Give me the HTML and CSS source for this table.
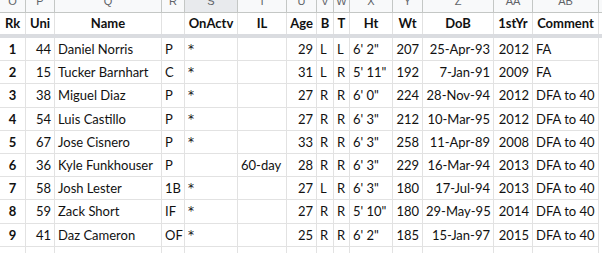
FILE: index.html
```html
<!DOCTYPE html>
<html>
<head>
<meta charset="utf-8">
<link rel="stylesheet" href="styles.css">
</head>
<body>
<div class="sheet">
  <div class="letters">
    <div class="lc">O</div><div class="lc">P</div><div class="lc">Q</div><div class="lc">R</div><div class="lc sel">S</div><div class="lc">T</div><div class="lc">U</div><div class="lc">V</div><div class="lc">W</div><div class="lc">X</div><div class="lc">Y</div><div class="lc">Z</div><div class="lc">AA</div><div class="lc">AB</div>
  </div>
  <div class="row head">
    <div class="c">Rk</div><div class="c">Uni</div><div class="c">Name</div><div class="c"></div><div class="c">OnActv</div><div class="c">IL</div><div class="c">Age</div><div class="c">B</div><div class="c">T</div><div class="c">Ht</div><div class="c">Wt</div><div class="c">DoB</div><div class="c">1stYr</div><div class="c">Comment</div>
  </div>
  <div class="band"></div>
  <div class="row">
    <div class="c rk">1</div><div class="c r">44</div><div class="c">Daniel Norris</div><div class="c">P</div><div class="c st">*</div><div class="c"></div><div class="c r">29</div><div class="c">L</div><div class="c">L</div><div class="c">6' 2"</div><div class="c r">207</div><div class="c r">25-Apr-93</div><div class="c r">2012</div><div class="c">FA</div>
  </div>
  <div class="row">
    <div class="c rk">2</div><div class="c r">15</div><div class="c">Tucker Barnhart</div><div class="c">C</div><div class="c st">*</div><div class="c"></div><div class="c r">31</div><div class="c">L</div><div class="c">R</div><div class="c">5' 11"</div><div class="c r">192</div><div class="c r">7-Jan-91</div><div class="c r">2009</div><div class="c">FA</div>
  </div>
  <div class="row">
    <div class="c rk">3</div><div class="c r">38</div><div class="c">Miguel Diaz</div><div class="c">P</div><div class="c st">*</div><div class="c"></div><div class="c r">27</div><div class="c">R</div><div class="c">R</div><div class="c">6' 0"</div><div class="c r">224</div><div class="c r">28-Nov-94</div><div class="c r">2012</div><div class="c">DFA to 40</div>
  </div>
  <div class="row">
    <div class="c rk">4</div><div class="c r">54</div><div class="c">Luis Castillo</div><div class="c">P</div><div class="c st">*</div><div class="c"></div><div class="c r">27</div><div class="c">R</div><div class="c">R</div><div class="c">6' 3"</div><div class="c r">212</div><div class="c r">10-Mar-95</div><div class="c r">2012</div><div class="c">DFA to 40</div>
  </div>
  <div class="row">
    <div class="c rk">5</div><div class="c r">67</div><div class="c">Jose Cisnero</div><div class="c">P</div><div class="c st">*</div><div class="c"></div><div class="c r">33</div><div class="c">R</div><div class="c">R</div><div class="c">6' 3"</div><div class="c r">258</div><div class="c r">11-Apr-89</div><div class="c r">2008</div><div class="c">DFA to 40</div>
  </div>
  <div class="row">
    <div class="c rk">6</div><div class="c r">36</div><div class="c">Kyle Funkhouser</div><div class="c">P</div><div class="c"></div><div class="c">60-day</div><div class="c r">28</div><div class="c">R</div><div class="c">R</div><div class="c">6' 3"</div><div class="c r">229</div><div class="c r">16-Mar-94</div><div class="c r">2013</div><div class="c">DFA to 40</div>
  </div>
  <div class="row">
    <div class="c rk">7</div><div class="c r">58</div><div class="c">Josh Lester</div><div class="c">1B</div><div class="c st">*</div><div class="c"></div><div class="c r">27</div><div class="c">L</div><div class="c">R</div><div class="c">6' 3"</div><div class="c r">180</div><div class="c r">17-Jul-94</div><div class="c r">2013</div><div class="c">DFA to 40</div>
  </div>
  <div class="row">
    <div class="c rk">8</div><div class="c r">59</div><div class="c">Zack Short</div><div class="c">IF</div><div class="c st">*</div><div class="c"></div><div class="c r">27</div><div class="c">R</div><div class="c">R</div><div class="c">5' 10"</div><div class="c r">180</div><div class="c r">29-May-95</div><div class="c r">2014</div><div class="c">DFA to 40</div>
  </div>
  <div class="row">
    <div class="c rk">9</div><div class="c r">41</div><div class="c">Daz Cameron</div><div class="c">OF</div><div class="c st">*</div><div class="c"></div><div class="c r">25</div><div class="c">R</div><div class="c">R</div><div class="c">6' 2"</div><div class="c r">185</div><div class="c r">15-Jan-97</div><div class="c r">2015</div><div class="c">DFA to 40</div>
  </div>
  <div class="row">
    <div class="c"></div><div class="c"></div><div class="c"></div><div class="c"></div><div class="c"></div><div class="c"></div><div class="c"></div><div class="c"></div><div class="c"></div><div class="c"></div><div class="c"></div><div class="c"></div><div class="c"></div><div class="c"></div>
  </div>
</div>
</body>
</html>
```

FILE: styles.css
```css
html, body {
  margin: 0;
  padding: 0;
  background: #ffffff;
  overflow: hidden;
}

.sheet {
  width: 602px;
  height: 253px;
  overflow: hidden;
  font-family: Lato, "Liberation Sans", sans-serif;
  font-size: 13px;
  color: #111111;
}

.letters,
.row {
  display: grid;
  grid-template-columns: 26px 29px 107px 23px 53px 49px 30px 17px 16px 43px 30px 71px 39px 66px;
}

.letters {
  height: 13px;
  background: #f8f9fa;
  border-bottom: 1px solid #c4c7c5;
  box-sizing: border-box;
  overflow: hidden;
}

.lc {
  border-right: 1px solid #c4c7c5;
  font-family: "Liberation Sans", Arial, sans-serif;
  font-size: 11px;
  color: #5f6368;
  text-align: center;
  line-height: 12px;
  margin-top: -10px;
  padding-top: 5px;
  height: 22px;
  box-sizing: border-box;
}

.lc.sel {
  background: #e8eaed;
}

.row {
  height: 23.2px;
}

.row.head {
  height: 21px;
  font-weight: bold;
}

.row.head .c {
  text-align: center;
  line-height: 21px;
  border-bottom: none;
}

.band {
  height: 4px;
  background: #dadce0;
}

.c {
  box-sizing: border-box;
  border-right: 1px solid #e2e2e2;
  border-bottom: 1px solid #e2e2e2;
  padding: 0 3px;
  white-space: nowrap;
  overflow: hidden;
  line-height: 22px;
}

.c.r {
  text-align: right;
}

.c.rk {
  text-align: center;
  font-weight: bold;
}

.c.st {
  font-family: "DejaVu Sans", sans-serif;
  font-size: 12px;
}
```
